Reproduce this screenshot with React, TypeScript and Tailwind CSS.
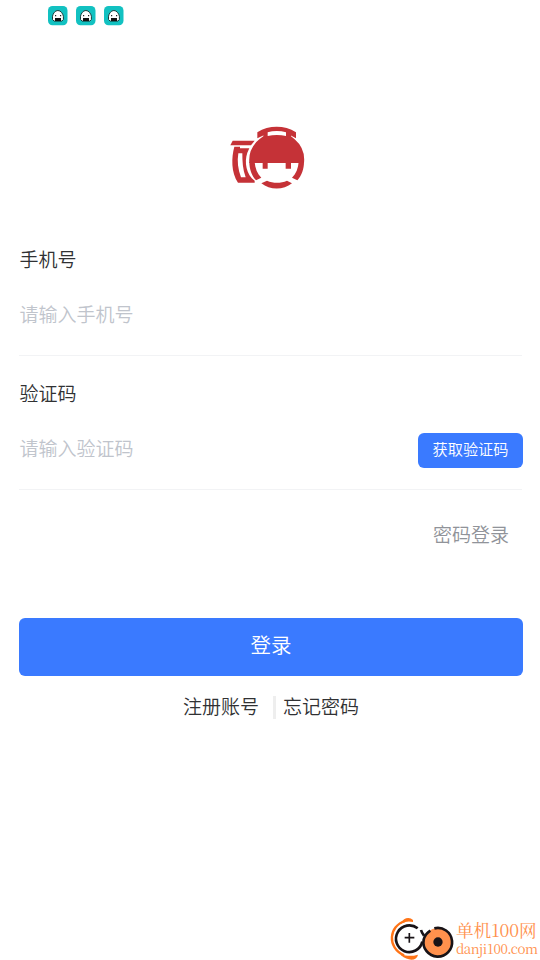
import clsx from 'clsx';

const sans = 'font-["Noto_Sans_CJK_SC",sans-serif]';

function StatusIcon() {
  return (
    <svg width="20" height="20" viewBox="0 0 20 20">
      <rect x="0" y="0" width="19.5" height="19.3" rx="4.5" fill="#12c1c1" />
      <path
        d="M4.5 13.5V10.2C5 7.6 7 4.5 9.9 4.5s4.9 3.1 5.5 5.7v3.3l-1.6 1.6H6.1z"
        fill="#fff"
        stroke="#173c3c"
        strokeWidth="1"
      />
      <path d="M7 12h6v3H7z" fill="#111" />
      <path d="M7 9h1.2v1.2H7zM12 9h1.2v1.2H12z" fill="#222" />
    </svg>
  );
}

function Logo() {
  return (
    <svg className="mx-auto block" width="75" height="64" viewBox="30 30 225 192" fill="#c53237">
      {/* camera side */}
      <path d="M38 77h66l-11 14H31z" />
      <path
        fillRule="evenodd"
        d="M43 95h17v5h28l-6 13c-10 28-3 66 22 84v6H54C33 172 34 127 43 95zM55 115c-4 24-1 48 8 72h14c-9-24-10-48-10-72z"
      />
      {/* head */}
      <path d="M88 144a82 82 0 0 1 30-71l12-9V50h83v14l11 9a82 82 0 0 1 28 71h-39v17h-16v-17h-54v17h-15v-17z" />
      <path d="M88 140h16c1 19 8 36 20 48l-16 8c-13-15-20-34-20-56zM252 140h-16c-1 19-8 36-20 48l16 8c13-15 20-34 20-56z" />
      <path d="M124 205l17-8c19 8 41 8 60 0l15 8c-26 21-66 21-92 0z" />
      {/* hat */}
      <path d="M112 52c35-22 81-22 116 0v18l-18-10v-7h-77v7l-21 10z" />
      <path d="M143 52c17-5 38-5 55 0v11c-17-4-38-4-55 0z" fill="#fff" />
    </svg>
  );
}

function SiteMark() {
  return (
    <svg className="shrink-0" width="66" height="43" viewBox="30 36 198 129" fill="none">
      <path d="M76 48C26 62 20 128 72 151" stroke="#ff7417" strokeWidth="7" />
      <path d="M63 54C70 38 89 34 99 45v6c-13-3-22-2-36 5zM63 147c16 7 33 7 51 2-4 19-29 20-51 2z" fill="#ff7417" />
      <path d="M113 70a40 40 0 1 0 14 40" stroke="#181317" strokeWidth="8" />
      <path d="M88 84v29M74 98h29" stroke="#181317" strokeWidth="5" />
      <path d="M123 75c2 7 5 12 9 17" stroke="#181317" strokeWidth="8" />
      <circle cx="174" cy="111" r="42" fill="#ff914d" />
      <path d="M163 70a43 43 0 1 1-32 34c3-12 9-20 20-27" stroke="#181317" strokeWidth="8" />
      <circle cx="174" cy="111" r="14" fill="#181317" />
    </svg>
  );
}

function Field({ label, placeholder, action }: { label: string; placeholder: string; action?: string }) {
  return (
    <div className="h-[134px] pt-2">
      <label className="block h-7 pl-[0.5px] text-[19px] leading-7 text-[#303133]">{label}</label>
      <div className="mt-[18px] flex h-[65px] w-[503px] items-start border-b border-[#f2f3f5] pt-[9px]">
        <span className="flex-1 pl-[0.5px] text-[19px] leading-7 text-[#c0c4cc]">{placeholder}</span>
        {action && (
          <button className="-mr-px -mt-px h-[35px] w-[105px] rounded-md bg-[#3a7aff] pb-1 text-[15.2px] leading-[31px] text-white">
            {action}
          </button>
        )}
      </div>
    </div>
  );
}

export default function App() {
  return (
    <div className={clsx('flex h-[960px] w-[540px] flex-col overflow-hidden bg-white font-[350]', sans)}>
      <header className="flex gap-2 pl-12 pt-[6px]">
        <StatusIcon />
        <StatusIcon />
        <StatusIcon />
      </header>

      <div className="mt-[99px] w-[535px]">
        <Logo />
      </div>

      <main className="mt-[48px] px-[19px]">
        <Field label="手机号" placeholder="请输入手机号" />
        <Field label="验证码" placeholder="请输入验证码" action="获取验证码" />

        <div className="mt-[15px] pr-[12px] text-right text-[19px] leading-7 text-[#909399]">密码登录</div>

        <button className="mt-[70px] h-[58px] w-[504px] rounded-md bg-[#3a7aff] pb-[6px] text-[20.5px] text-white">登录</button>

        <div className="mt-4 flex pl-[164px] text-[19px] leading-7 text-[#303133]">
          <span>注册账号</span>
          <span className="ml-[14px] mr-[7px] mt-1 h-[23px] w-[3px] bg-[#eee]" />
          <span>忘记密码</span>
        </div>
      </main>

      <footer className="mt-auto flex h-[43px] pl-[390px]">
        <SiteMark />
        <div className="whitespace-nowrap font-['Noto_Serif_CJK_SC','Liberation_Serif','Noto_Sans_CJK_SC',serif] font-normal text-[#ff914d]">
          <div className="mt-px text-[17.6px] leading-[24px]">单机100网</div>
          <div className="mt-[-3px] text-[13.4px] leading-[20px] tracking-[-0.5px]">danji100.com</div>
        </div>
      </footer>
    </div>
  );
}
